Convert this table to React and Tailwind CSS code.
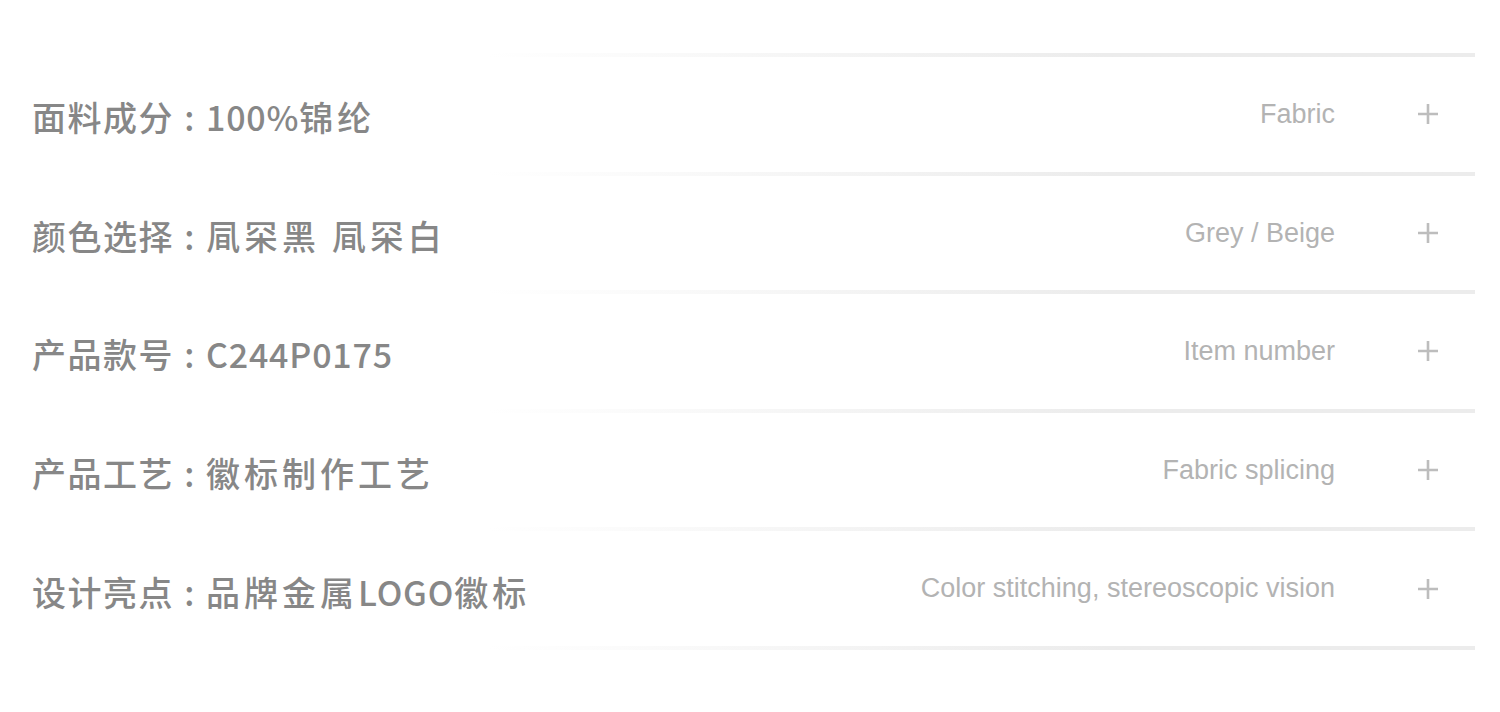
const rows = [
  { label: '面料成分', value: '100%锦纶', en: 'Fabric' },
  { label: '颜色选择', value: '凬罙黑 凬罙白', en: 'Grey / Beige' },
  { label: '产品款号', value: 'C244P0175', en: 'Item number' },
  { label: '产品工艺', value: '徽标制作工艺', en: 'Fabric splicing' },
  { label: '设计亮点', value: '品牌金属LOGO徽标', en: 'Color stitching, stereoscopic vision' },
];

function Divider() {
  return <div className="h-[4px] w-full bg-gradient-to-r from-transparent from-[33%] to-[#ececec] to-[75%]" />;
}

function Plus() {
  return (
    <svg width="22" height="22" viewBox="0 0 22 22" className="text-[#bdbdbd]">
      <path d="M11 1v20M1 11h20" stroke="currentColor" strokeWidth="2.6" fill="none" />
    </svg>
  );
}

// latin runs are set tighter than the CJK ones
function Value({ text }) {
  return (
    <span className="whitespace-pre">
      {text.split(/([A-Za-z0-9%]+)/).filter(Boolean).map((part, i) =>
        /[A-Za-z0-9%]/.test(part) ? (
          <span key={i} className="tracking-[0.8px]">{part}</span>
        ) : (
          <span key={i} className="tracking-[4px]">{part}</span>
        )
      )}
    </span>
  );
}

export default function App() {
  return (
    <div className="w-[1500px] h-[712px] bg-white pt-[53px]">
      <div className="w-[1475px]">
        {rows.map((r) => (
          <div key={r.label}>
            <Divider />
            <div className="flex items-center h-[114.6px] pl-[32px] pr-[10px]">
              <div className="flex-1 flex items-center pt-[5px] text-[34px] font-medium text-[#878787] tracking-[1.5px] font-['Noto_Sans_CJK_SC',sans-serif] whitespace-nowrap">
                <span>{r.label}</span>
                <span className="w-[32px] text-center">:</span>
                <Value text={r.value} />
              </div>
              <div className="text-[27px] text-[#b3b3b3] font-['Liberation_Sans',Arial,sans-serif] whitespace-nowrap">
                {r.en}
              </div>
              <div className="ml-[56px] w-[74px] flex items-center justify-center">
                <Plus />
              </div>
            </div>
          </div>
        ))}
        <Divider />
      </div>
    </div>
  );
}
